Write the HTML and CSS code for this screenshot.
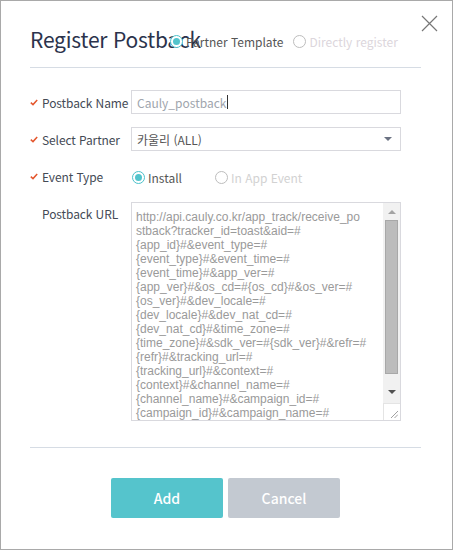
FILE: index.html
```html
<!DOCTYPE html>
<html lang="ko">
<head>
<meta charset="utf-8">
<title>Register Postback</title>
<link rel="stylesheet" href="styles.css">
</head>
<body>
<div class="dialog">
  <button class="close" aria-label="close">
    <svg width="17" height="17" viewBox="0 0 17 17"><path d="M1 1L16 16M16 1L1 16" stroke="#777" stroke-width="1.2" fill="none"/></svg>
  </button>
  <div class="header">
    <h1 class="title">Register Postback</h1>
    <div class="radios">
      <label class="radio checked"><span class="dot"></span><span class="rtext">Partner Template</span></label>
      <label class="radio disabled"><span class="dot"></span><span class="rtext">Directly register</span></label>
    </div>
  </div>
  <div class="form">
    <div class="label"><svg class="check" width="8" height="7" viewBox="0 0 8 7"><path d="M0.8 3.6L3 5.6L7.2 1" stroke="#e4572e" stroke-width="1.5" fill="none"/></svg>Postback Name</div>
    <div class="field input"><span class="val">Cauly_postback</span><span class="caret"></span></div>

    <div class="label"><svg class="check" width="8" height="7" viewBox="0 0 8 7"><path d="M0.8 3.6L3 5.6L7.2 1" stroke="#e4572e" stroke-width="1.5" fill="none"/></svg>Select Partner</div>
    <div class="field select"><span class="sval">카울리 (ALL)</span><span class="arrow"></span></div>

    <div class="label"><svg class="check" width="8" height="7" viewBox="0 0 8 7"><path d="M0.8 3.6L3 5.6L7.2 1" stroke="#e4572e" stroke-width="1.5" fill="none"/></svg>Event Type</div>
    <div class="radios event">
      <label class="radio checked"><span class="dot"></span><span class="rtext">Install</span></label>
      <label class="radio disabled"><span class="dot"></span><span class="rtext">In App Event</span></label>
    </div>

    <div class="label url">Postback URL</div>
    <div class="textarea">
      <div class="tatext">http://api.cauly.co.kr/app_track/receive_po<br>stback?tracker_id=toast&amp;aid=#<br>{app_id}#&amp;event_type=#<br>{event_type}#&amp;event_time=#<br>{event_time}#&amp;app_ver=#<br>{app_ver}#&amp;os_cd=#{os_cd}#&amp;os_ver=#<br>{os_ver}#&amp;dev_locale=#<br>{dev_locale}#&amp;dev_nat_cd=#<br>{dev_nat_cd}#&amp;time_zone=#<br>{time_zone}#&amp;sdk_ver=#{sdk_ver}#&amp;refr=#<br>{refr}#&amp;tracking_url=#<br>{tracking_url}#&amp;context=#<br>{context}#&amp;channel_name=#<br>{channel_name}#&amp;campaign_id=#<br>{campaign_id}#&amp;campaign_name=#</div>
      <div class="sidebar">
        <div class="scrollbar">
          <span class="sarrow up"></span>
          <span class="thumb"></span>
          <span class="sarrow down"></span>
        </div>
        <div class="grip">
          <svg width="8" height="8" viewBox="0 0 8 8"><path d="M1 8L8 1M4.5 8L8 4.5" stroke="#888" stroke-width="0.8" fill="none"/></svg>
        </div>
      </div>
    </div>
  </div>
  <div class="footer">
    <button class="btn add">Add</button>
    <button class="btn cancel">Cancel</button>
  </div>
</div>
</body>
</html>
```

FILE: styles.css
```css
* { box-sizing: border-box; }
html, body { margin: 0; padding: 0; background: #fff; }
body { font-family: "Noto Sans CJK KR", "Noto Sans", sans-serif; }

.dialog {
  position: relative;
  width: 453px;
  height: 550px;
  border: 1px solid #a9a9a9;
  padding: 0 31px 0 29px;
  background: #fff;
}

.close {
  position: absolute;
  top: 14px;
  left: 420px;
  width: 17px;
  height: 17px;
  padding: 0;
  border: 0;
  background: none;
}
.close svg { display: block; }

.header {
  display: flex;
  align-items: center;
  height: 67px;
  padding-top: 14px;
  border-bottom: 1px solid #d6dce4;
}
.title {
  margin: 0;
  width: 140px;
  flex-shrink: 0;
  white-space: nowrap;
  font-size: 21px;
  letter-spacing: -0.2px;
  font-weight: 400;
  color: #2b334c;
  line-height: 26px;
  margin-top: -5px;
}

.radios { display: flex; align-items: center; gap: 10px; }
.radio { display: flex; align-items: center; gap: 2px; font-size: 12px; color: #555; line-height: 15px; }
.dot {
  position: relative;
  width: 13px;
  height: 13px;
  border-radius: 50%;
  border: 1px solid #bdbdbd;
  background: #fff;
  flex-shrink: 0;
}
.radio.checked .dot { border-color: #4cc2cb; }
.radio.checked .dot::after {
  content: "";
  position: absolute;
  left: 2px; top: 2px;
  width: 7px; height: 7px;
  border-radius: 50%;
  background: #52c4cc;
}
.radio.disabled .rtext { color: #dcd6dc; }
.header .radio .rtext { margin-left: 1px; }

.form {
  display: grid;
  grid-template-columns: 101px 270px;
  row-gap: 13px;
  margin-top: 22px;
  align-items: center;
}
.label {
  display: flex;
  align-items: center;
  font-size: 12px;
  letter-spacing: -0.1px;
  color: #444a55;
  white-space: nowrap;
  line-height: 15px;
}
.check { margin-right: 4px; flex-shrink: 0; }
.label.url { align-self: start; padding-left: 12px; padding-top: 4px; }

.field {
  height: 24px;
  border: 1px solid #d9d9de;
  display: flex;
  align-items: center;
  padding: 0 5px;
  font-size: 12px;
  line-height: 15px;
}
.input .val { color: #a0a5ad; }
.caret { width: 1px; height: 14px; background: #333; margin-left: 1px; }
.select { justify-content: space-between; padding-right: 8px; }
.select .sval { color: #555; }
.arrow {
  width: 0; height: 0;
  border-left: 4px solid transparent;
  border-right: 4px solid transparent;
  border-top: 4px solid #6b7282;
}

.event { height: 24px; gap: 33px; margin-left: 1px; margin-top: 1px; }
.event .radio { gap: 3px; }
.event .radio.disabled .rtext { color: #d2d2d2; }

.textarea {
  display: flex;
  height: 219px;
  border: 1px solid #d9d9de;
  overflow: hidden;
}
.tatext {
  flex: 1;
  padding: 7px 0 0 4px;
  font-family: "Liberation Sans", Arial, sans-serif;
  font-size: 12px;
  line-height: 14px;
  color: #9a9a9a;
  white-space: nowrap;
  overflow: hidden;
}
.sidebar { width: 17px; display: flex; flex-direction: column; }
.scrollbar {
  flex: 1;
  background: #f1f1f1;
  display: flex;
  flex-direction: column;
  align-items: center;
  padding: 0 2px;
}
.sarrow { width: 0; height: 0; border-left: 4px solid transparent; border-right: 4px solid transparent; }
.sarrow.up { border-bottom: 4px solid #a3a3a3; margin-top: 7px; }
.sarrow.down { border-top: 4px solid #505050; margin-top: 16px; }
.thumb {
  width: 13px;
  height: 154px;
  margin-top: 6px;
  background: #bcbcbc;
  border: 1px solid #a8a8a8;
}
.grip {
  height: 17px;
  background: #fff;
  border-top: 1px solid #e4e4e4;
  border-left: 1px solid #e4e4e4;
  display: flex;
  align-items: flex-end;
  justify-content: flex-end;
  padding: 0 2px 2px 0;
}
.grip svg { display: block; }

.footer {
  margin-top: 26px;
  border-top: 1px solid #d6dce4;
  padding-top: 30px;
  display: flex;
  justify-content: center;
  gap: 5px;
}
.btn {
  width: 112px;
  height: 40px;
  border: 0;
  border-radius: 2px;
  color: #fff;
  font-family: "Noto Sans CJK KR", "Noto Sans", sans-serif;
  font-size: 14px;
  font-weight: 500;
}
.add { background: #55c4cc; }
.cancel { background: #c3c9d1; }
```
